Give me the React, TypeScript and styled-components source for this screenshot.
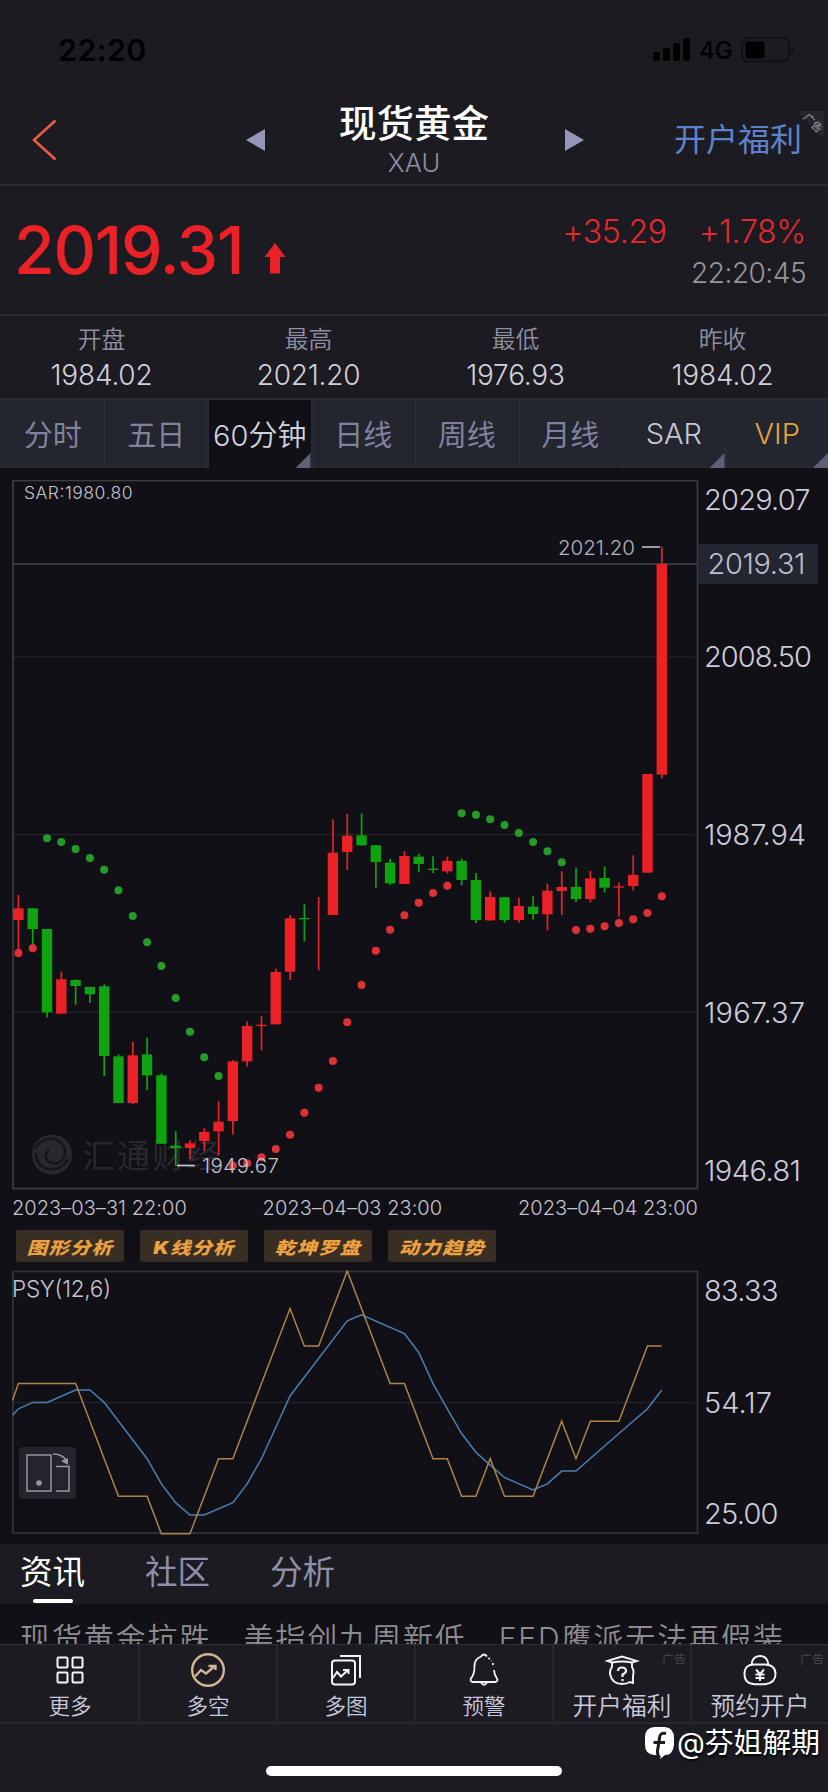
import React from "react";
import styled, { createGlobalStyle, css } from "styled-components";

type Tone = "up" | "down";
// [tone, high, body top, body bottom, low], in thirds of a pixel from CANDLE_BASE
type Candle = [Tone, number, number, number, number];

const CANDLE_BASE = 300;
const FIRST_X = 18.4;
const STEP = 14.297;
const RED = "#ea2127";
const GREEN = "#0fa30f";

const candles: Candle[] = [
  ["up", 345, 385, 420, 510],
  ["down", 385, 385, 447, 495],
  ["down", 447, 447, 697, 712],
  ["up", 575, 598, 701, 701],
  ["down", 598, 600, 618, 674],
  ["down", 620, 621, 643, 669],
  ["down", 613, 619, 828, 888],
  ["down", 823, 829, 969, 969],
  ["up", 786, 826, 969, 972],
  ["down", 773, 823, 886, 930],
  ["down", 880, 886, 1091, 1091],
  ["down", 1053, 1097, 1104, 1158],
  ["up", 1081, 1090, 1104, 1137],
  ["up", 1045, 1056, 1083, 1113],
  ["up", 964, 1025, 1054, 1126],
  ["up", 840, 844, 1023, 1064],
  ["up", 724, 738, 844, 860],
  ["up", 708, 734, 738, 811],
  ["up", 566, 576, 733, 733],
  ["up", 405, 415, 575, 600],
  ["down", 373, 414, 418, 484],
  ["up", 351, 351, 351, 571],
  ["up", 118, 218, 405, 405],
  ["up", 102, 167, 216, 270],
  ["down", 100, 166, 196, 196],
  ["down", 195, 196, 246, 323],
  ["down", 237, 248, 310, 314],
  ["up", 214, 228, 312, 312],
  ["down", 221, 230, 252, 277],
  ["down", 229, 266, 270, 279],
  ["up", 230, 243, 274, 280],
  ["down", 236, 243, 300, 316],
  ["down", 279, 300, 420, 429],
  ["up", 334, 351, 421, 423],
  ["down", 351, 352, 420, 428],
  ["up", 353, 378, 420, 428],
  ["down", 349, 380, 402, 419],
  ["up", 311, 332, 403, 451],
  ["up", 274, 321, 333, 405],
  ["down", 263, 321, 357, 366],
  ["up", 273, 295, 357, 367],
  ["down", 260, 294, 323, 338],
  ["up", 308, 319, 323, 410],
  ["up", 226, 285, 318, 332],
  ["up", -18, -18, 278, 278],
  ["up", -700, -648, -16, -5],
];

const sarRuns: { tone: Tone; from: number; values: number[] }[] = [
  { tone: "up", from: 0, values: [519, 505] },
  {
    tone: "down",
    from: 2,
    values: [175, 186, 207, 234, 269, 331, 408, 487, 558, 654, 755, 832, 888],
  },
  {
    tone: "up",
    from: 15,
    values: [
      1157, 1150, 1132, 1107, 1064, 998, 923, 843, 727, 615, 512, 449, 406, 368,
      339, 317,
    ],
  },
  { tone: "down", from: 31, values: [100, 104, 118, 135, 159, 186, 214, 247] },
  { tone: "up", from: 39, values: [450, 446, 439, 429, 418, 399, 349] },
];

// [candle index, steps above the lowest level]
const psyLine: [number, number][] = [
  [-0.41, 3.55], [0, 4], [4, 4], [7, 1], [9, 1], [10, 0], [12, 0], [14, 2],
  [15, 2], [19, 6], [20, 5], [21, 5], [23, 7], [26, 4], [27, 4], [29, 2],
  [30, 2], [31, 1], [32, 1], [33, 2], [34, 1], [36, 1], [38, 3], [39, 2],
  [40, 3], [42, 3], [44, 5], [45, 5],
];
const psyAverage: [number, number][] = [
  [-0.41, 3.16], [0, 3.33], [1, 3.5], [2, 3.5], [4, 3.83], [5, 3.83], [6, 3.5],
  [9, 2], [10, 1.33], [11, 0.83], [12, 0.5], [13, 0.5], [15, 0.83], [16, 1.33],
  [17, 2], [18, 2.83], [19, 3.67], [23, 5.67], [24, 5.83], [27, 5.33],
  [28, 4.83], [29, 4], [30, 3.33], [31, 2.67], [32, 2.17], [33, 1.83],
  [34, 1.5], [36, 1.17], [37, 1.33], [38, 1.67], [39, 1.67], [42, 2.67],
  [44, 3.33], [45, 3.83],
];

const stats = [
  { label: "开盘", value: "1984.02" },
  { label: "最高", value: "2021.20" },
  { label: "最低", value: "1976.93" },
  { label: "昨收", value: "1984.02" },
];

const periods: { label: string; kind?: "active" | "light" | "gold"; corner?: boolean }[] = [
  { label: "分时" },
  { label: "五日" },
  { label: "60分钟", kind: "active", corner: true },
  { label: "日线" },
  { label: "周线" },
  { label: "月线" },
  { label: "SAR", kind: "light", corner: true },
  { label: "VIP", kind: "gold", corner: true },
];

const axisLabels = [
  { text: "2029.07", y: 19, width: 106.5 },
  { text: "2008.50", y: 176.5, width: 108 },
  { text: "1987.94", y: 354.5, width: 102 },
  { text: "1967.37", y: 532, width: 101 },
  { text: "1946.81", y: 690, width: 97 },
];

const candleX = (index: number) => FIRST_X + STEP * index;
const candleY = (value: number) => CANDLE_BASE + value / 3;
const toneColor = (tone: Tone) => (tone === "up" ? RED : GREEN);
const psyPoints = (points: [number, number][]) =>
  points.map(([i, level]) => `${candleX(i)},${263.8 - level * 37.55}`).join(" ");

const PriceChart = () => (
  <ChartSvg width="828" height="712" viewBox="0 0 828 712">
    <g stroke="#212129" strokeWidth="1.5">
      <path d="M13 177H695M13 354.5H695M13 532.3H695" />
    </g>
    <g opacity="0.9">
      <circle cx="52" cy="674.5" r="20" fill="#2c2b31" />
      <path
        d="M35 669q9-15 24-8q10 8 4 18q-7 8-15 2q-5-6 1-11M68 679q-6 12-20 10q-13-4-12-16"
        fill="none"
        stroke="#17161c"
        strokeWidth="2.5"
      />
      <text x="82" y="688" fontSize="33" fontWeight="400" fill="#2c2b31" textLength="138">
        汇通财经
      </text>
    </g>
    <path d="M13 84H698" stroke="#45454d" strokeWidth="1.5" />
    <rect x="13" y="0.5" width="684.5" height="708" fill="none" stroke="#3c3c43" strokeWidth="1.7" />
    {candles.map(([tone, high, top, bottom, low], i) => (
      <g key={i} fill={toneColor(tone)}>
        <rect x={candleX(i) - 0.8} y={candleY(high)} width="1.7" height={(low - high) / 3} />
        <rect x={candleX(i) - 5.2} y={candleY(top)} width="10.4" height={(bottom - top) / 3} />
      </g>
    ))}
    {sarRuns.map((run) =>
      run.values.map((value, i) => (
        <circle
          key={run.from + i}
          cx={candleX(run.from + i)}
          cy={candleY(value)}
          r="4"
          fill={run.tone === "up" ? "#de3035" : "#259b28"}
        />
      ))
    )}
    <text x="24" y="19" fontSize="17.5" fill="#c4c3d1" textLength="108.5">
      SAR:1980.80
    </text>
    <path d="M642 67H660" stroke="#b4b3c1" strokeWidth="1.7" />
    <text x="558" y="74.5" fontSize="20.5" fill="#b4b3c1" textLength="77">
      2021.20
    </text>
    <path d="M177 685.5H195" stroke="#c4c3d1" strokeWidth="1.7" />
    <text x="202" y="692.5" fontSize="20.5" fill="#c4c3d1" textLength="77">
      1949.67
    </text>
    <rect x="698" y="64" width="120" height="40" fill="#212630" />
    <text x="707.5" y="94" fontSize="29" fill="#bcbecb" textLength="98">
      2019.31
    </text>
    {axisLabels.map(({ text, y, width }) => (
      <text key={text} x="704" y={y + 10.5} fontSize="29" fill="#cccbda" textLength={width}>
        {text}
      </text>
    ))}
  </ChartSvg>
);

const PsyChart = () => (
  <ChartSvg width="828" height="274" viewBox="0 0 828 274">
    <path d="M13 132.5H695" stroke="#212129" strokeWidth="1.5" />
    <rect x="13" y="1.5" width="684.5" height="261.5" fill="none" stroke="#34343b" strokeWidth="1.7" />
    <polyline points={psyPoints(psyAverage)} fill="none" stroke="#4b7fb3" strokeWidth="1.5" />
    <polyline points={psyPoints(psyLine)} fill="none" stroke="#ad8447" strokeWidth="1.5" />
    <text x="12" y="27" fontSize="22.5" fill="#c4c3d1" textLength="99">
      PSY(12,6)
    </text>
    <rect x="19" y="177" width="57" height="52" rx="4" fill="#24242e" />
    <g fill="none" stroke="#97969c" strokeWidth="1.5">
      <rect x="27" y="185" width="24" height="36" />
      <path d="M56 196.500H69V221H56M53 184q9 0 13 6" />
    </g>
    <circle cx="39" cy="213" r="2.8" fill="#97969c" />
    <path d="M61 191L68 188V195Z" fill="#97969c" />
    {[
      { text: "83.33", y: 20, width: 74.5 },
      { text: "54.17", y: 132, width: 68 },
      { text: "25.00", y: 243.5, width: 74.5 },
    ].map(({ text, y, width }) => (
      <text key={text} x="704" y={y + 10.5} fontSize="29" fill="#cccbda" textLength={width}>
        {text}
      </text>
    ))}
  </ChartSvg>
);

const MoreIcon = () => (
  <svg width="36" height="36" viewBox="0 0 36 36" fill="none" stroke="#f4f4f6" strokeWidth="2">
    <rect x="5.500" y="5.500" width="10" height="10" rx="1" />
    <rect x="20.500" y="5.500" width="10" height="10" rx="1" />
    <rect x="5.500" y="20.500" width="10" height="10" rx="1" />
    <rect x="20.500" y="20.500" width="10" height="10" rx="1" />
  </svg>
);

const LongShortIcon = () => (
  <svg width="36" height="36" viewBox="0 0 36 36" fill="none" stroke="#d3b594" strokeWidth="2.4">
    <circle cx="18" cy="18" r="15.800" />
    <path d="M5 24.500L11 18L16 21.500L25 14M18.500 14H25.500V18" />
  </svg>
);

const MultiChartIcon = () => (
  <svg width="36" height="36" viewBox="0 0 36 36" fill="none" stroke="#f4f4f6" strokeWidth="2">
    <rect x="4" y="8.500" width="23" height="24" rx="3" />
    <path d="M12 4H32V26M5 26L9 20L13 24.500L20 18M15 18H20.500V22" />
  </svg>
);

const BellIcon = () => (
  <svg width="36" height="36" viewBox="0 0 36 36" fill="none" stroke="#f4f4f6" strokeWidth="1.8">
    <path d="M21 4.500Q19.500 2.500 18 2.500T15 4.500Q8.500 7 8.500 14Q8.500 23 4.800 26.500Q4 30 7 30H29Q32.500 29.500 31 26.500Q28.200 23 28 18" />
    <path d="M22.500 5.800L25.500 9M26.700 11L27.500 15" strokeDasharray="2 2" />
    <path d="M15 30.500Q18 35 21 30.500" />
  </svg>
);

const GraduateIcon = () => (
  <svg width="36" height="36" viewBox="0 0 36 36" fill="none" stroke="#f4f4f6" strokeWidth="1.9">
    <path d="M3.500 9L18 4.500L33 9L28 10.500Q18 8.500 8 10.500Z" />
    <path d="M8 11V15Q5.500 18 6 22Q8 32 18 32Q23 32 26 30L29 31V24Q30.500 19 28 15V10.500" />
    <path d="M14 19Q14 15.500 18 15.500T22 19Q22 21 18.500 22.500V25M18.500 27V29.200" strokeWidth="2.200" />
  </svg>
);

const PurseIcon = () => (
  <svg width="36" height="36" viewBox="0 0 36 36" fill="none" stroke="#f4f4f6" strokeWidth="1.9">
    <path d="M9.500 13.500Q10 4 18 4T26.500 13.500M13 12.500H23Q33.500 13 33.500 22T23 32.200H13Q2.500 32 2.500 22T13 12.500Z" />
    <path d="M14 17.500L18 22L22 17.500M18 22V29M13.500 22.500H22.500M13.500 26H22.500" />
  </svg>
);

const actions = [
  { label: "更多", icon: <MoreIcon />, size: 21.5 },
  { label: "多空", icon: <LongShortIcon />, size: 21.5 },
  { label: "多图", icon: <MultiChartIcon />, size: 21.5 },
  { label: "预警", icon: <BellIcon />, size: 21.5 },
  { label: "开户福利", icon: <GraduateIcon />, size: 24.7, ad: true },
  { label: "预约开户", icon: <PurseIcon />, size: 24.7, ad: true },
];

const App = () => {
  return (
    <Screen>
      <GlobalStyle />
      <StatusBar>
        <Clock>22:20</Clock>
        <Signals>
          <svg width="38" height="26" viewBox="0 0 38 26">
            <rect x="0" y="15" width="7" height="9" rx="2" />
            <rect x="10" y="11" width="7" height="13" rx="2" />
            <rect x="20" y="6" width="7" height="18" rx="2" />
            <rect x="30" y="1" width="7" height="23" rx="2" />
          </svg>
          <Network>4G</Network>
          <svg width="54" height="26" viewBox="0 0 54 26">
            <rect x="1" y="1" width="47" height="23.500" rx="6" fill="none" stroke="#111015" strokeWidth="2" />
            <rect x="4.500" y="4.500" width="19" height="17" rx="3" />
            <path d="M50 9q3 1.500 3 4t-3 4z" fill="#111015" />
          </svg>
        </Signals>
      </StatusBar>

      <Header>
        <svg width="26" height="42" viewBox="0 0 26 42">
          <path d="M23.500 1.500L2 21L23.500 40.500" fill="none" stroke="#ee5b45" strokeWidth="2.6" />
        </svg>
        <Switcher>
          <Arrow $side="left" />
          <Title>
            <TitleName>现货黄金</TitleName>
            <TitleCode>XAU</TitleCode>
          </Title>
          <Arrow $side="right" />
        </Switcher>
        <BonusLink>
          开户福利
          <CornerAd>
            <span>广告</span>
          </CornerAd>
        </BonusLink>
      </Header>

      <Quote>
        <Price>2019.31</Price>
        <svg width="22" height="32" viewBox="0 0 22 32">
          <path d="M11 1L21.500 15H16V31.500H6V15H0.500Z" fill="#ea2127" />
        </svg>
        <Change>
          <ChangeRow>
            <span>+35.29</span>
            <span>+1.78%</span>
          </ChangeRow>
          <QuoteTime>22:20:45</QuoteTime>
        </Change>
      </Quote>

      <Stats>
        {stats.map(({ label, value }) => (
          <Stat key={label}>
            <StatLabel>{label}</StatLabel>
            <StatValue>{value}</StatValue>
          </Stat>
        ))}
      </Stats>

      <Periods>
        {periods.map(({ label, kind, corner }) => (
          <Period key={label} $kind={kind} $corner={corner}>
            {label}
          </Period>
        ))}
      </Periods>

      <ChartArea>
        <PriceChart />
        <Dates>
          <span>2023–03–31 22:00</span>
          <span>2023–04–03 23:00</span>
          <span>2023–04–04 23:00</span>
        </Dates>
        <Chips>
          {["图形分析", "K线分析", "乾坤罗盘", "动力趋势"].map((label) => (
            <Chip key={label}>
              <span>{label}</span>
            </Chip>
          ))}
        </Chips>
        <PsyChart />
      </ChartArea>

      <Sections>
        <Section $active>资讯</Section>
        <Section>社区</Section>
        <Section>分析</Section>
      </Sections>
      <News>
        <span>现货黄金抗跌</span>
        <span>美指创九周新低</span>
        <span>FED鹰派无法再假装</span>
      </News>

      <Actions>
        {actions.map(({ label, icon, size, ad }) => (
          <Action key={label}>
            {icon}
            <ActionLabel $size={size}>{label}</ActionLabel>
            {ad && <AdTag>广告</AdTag>}
          </Action>
        ))}
      </Actions>

      <Footer>
        <Signature>
          <svg width="30" height="32" viewBox="0 0 30 32">
            <path
              d="M9 0H20Q29 1 29 11V18Q28 28 20 28L15 32L14 28H9Q0 27 0 18V10Q0 1 9 0Z"
              fill="#fff"
            />
            <path
              d="M21 6.500Q15 5 14.500 11L12.500 24Q12 28 15 31M8.500 15.500H20"
              fill="none"
              stroke="#1c1b21"
              strokeWidth="3"
            />
          </svg>
          <span>@芬姐解期</span>
        </Signature>
        <HomeBar />
      </Footer>
    </Screen>
  );
};

export default App;

const GlobalStyle = createGlobalStyle`
  * {
    box-sizing: border-box;
  }
  body {
    margin: 0;
    background: #1c1b21;
    font-family: Inter, "Noto Sans CJK SC", sans-serif;
    font-weight: 350;
  }
  svg {
    display: block;
    flex: none;
  }
`;

const Screen = styled.div`
  width: 828px;
  height: 1792px;
  overflow: hidden;
  display: flex;
  flex-direction: column;
  background: #1c1b21;
  white-space: nowrap;
  > * {
    flex: none;
  }
`;

const StatusBar = styled.div`
  height: 95px;
  padding: 4px 33px 0 58px;
  display: flex;
  align-items: center;
  justify-content: space-between;
  color: #000;
`;

const Clock = styled.div`
  font-size: 30.5px;
  font-weight: 600;
  letter-spacing: 0.4px;
`;

const Signals = styled.div`
  display: flex;
  align-items: center;
  gap: 8px;
`;

const Network = styled.div`
  width: 34px;
  font-size: 24.5px;
  font-weight: 500;
  letter-spacing: -0.5px;
`;

const Header = styled.header`
  height: 91px;
  padding: 0 26px 0 32px;
  display: grid;
  grid-template-columns: 214px 338px 1fr;
  align-items: center;
  border-bottom: 2px solid #2a2a30;
`;

const Switcher = styled.div`
  height: 89px;
  display: flex;
  align-items: center;
  justify-content: space-between;
`;

const Arrow = styled.div<{ $side: "left" | "right" }>`
  border: 11px solid transparent;
  border-width: 11px 0;
  ${({ $side }) =>
    $side === "left"
      ? css`
          border-right: 19px solid #9496b5;
        `
      : css`
          border-left: 19px solid #9496b5;
        `}
`;

const Title = styled.div`
  padding: 3px 2px 0 0;
  display: flex;
  flex-direction: column;
  align-items: center;
`;

const TitleName = styled.div`
  font-size: 37.5px;
  line-height: 44px;
  font-weight: 500;
  color: #fff;
`;

const TitleCode = styled.div`
  font-size: 25.5px;
  line-height: 34px;
  color: #8e8ea3;
`;

const BonusLink = styled.div`
  position: relative;
  justify-self: end;
  font-size: 32px;
  line-height: 44px;
  font-weight: 400;
  color: #5d84cb;
`;

const CornerAd = styled.div`
  position: absolute;
  top: -7px;
  right: -22px;
  width: 28px;
  height: 28px;
  background: linear-gradient(45deg, transparent 50%, #26262b 50%);
  color: #a0a0a6;
  font-size: 11px;
  line-height: 14px;

  > span {
    position: absolute;
    top: 5px;
    left: 6px;
    transform: rotate(45deg);
  }
`;

const Quote = styled.section`
  height: 130px;
  padding: 0 22px 0 14px;
  display: flex;
  align-items: center;
  border-bottom: 2px solid #2a2a30;

  > svg {
    margin: 16px 0 0 22px;
  }
`;

const Price = styled.div`
  width: 228px;
  font-size: 66px;
  font-weight: 500;
  letter-spacing: -1.2px;
  color: #ea2127;
`;

const Change = styled.div`
  margin-left: auto;
  padding-top: 3px;
  display: flex;
  flex-direction: column;
  align-items: flex-end;
`;

const ChangeRow = styled.div`
  display: flex;
  gap: 32px;
  font-size: 32px;
  line-height: 42px;
  letter-spacing: -0.3px;
  color: #e3292e;
`;

const QuoteTime = styled.div`
  font-size: 28px;
  line-height: 40px;
  letter-spacing: -0.5px;
  color: #95959c;
`;

const Stats = styled.section`
  height: 84px;
  padding-top: 6px;
  display: grid;
  grid-template-columns: repeat(4, 1fr);
  border-bottom: 2px solid #2a2a30;
`;

const Stat = styled.div`
  padding-right: 4px;
  display: flex;
  flex-direction: column;
  align-items: center;
`;

const StatLabel = styled.div`
  font-size: 23.8px;
  line-height: 35px;
  color: #8f8fa4;
`;

const StatValue = styled.div`
  font-size: 28px;
  line-height: 36px;
  letter-spacing: -0.2px;
  color: #d1d0dd;
`;

const Periods = styled.nav`
  height: 68px;
  display: grid;
  grid-template-columns: repeat(8, 1fr);
  background: #23252f;
  border-bottom: 2px solid #292a31;
`;

interface PeriodProps {
  $kind?: "active" | "light" | "gold";
  $corner?: boolean;
}
const Period = styled.div<PeriodProps>`
  position: relative;
  height: 68px;
  padding-bottom: 2px;
  display: flex;
  align-items: center;
  justify-content: center;
  border-left: 2px solid #292b34;
  font-size: 29px;
  font-weight: 400;
  color: #80829f;

  &:first-child {
    border-color: transparent;
  }

  ${({ $kind }) =>
    $kind === "active" &&
    css`
      background: #111016;
      font-weight: 350;
      color: #d0d0de;
    `}
  ${({ $kind }) =>
    $kind === "light" &&
    css`
      font-weight: 350;
      color: #c8c9d8;
    `}
  ${({ $kind }) =>
    $kind === "gold" &&
    css`
      font-weight: 350;
      color: #e4a441;
    `}
  ${({ $corner }) =>
    $corner &&
    css`
      &::after {
        content: "";
        position: absolute;
        right: 0;
        bottom: 0;
        width: 15px;
        height: 15px;
        background: #5f5f76;
        clip-path: polygon(100% 0, 100% 100%, 0 100%);
      }
    `}
`;

const ChartArea = styled.main`
  height: 1076px;
  padding-top: 12px;
  background: #111016;
`;

const ChartSvg = styled.svg`
  font-family: Inter, "Noto Sans CJK SC", sans-serif;
  font-weight: 350;
`;

const Dates = styled.div`
  height: 30px;
  padding: 2px 130px 0 12px;
  display: flex;
  align-items: center;
  justify-content: space-between;
  font-size: 20px;
  letter-spacing: 0.05px;
  color: #c4c3d1;
`;

const Chips = styled.div`
  height: 48px;
  padding: 8px 16px;
  display: flex;
  gap: 16px;
`;

const Chip = styled.div`
  width: 108px;
  height: 32px;
  display: flex;
  align-items: center;
  justify-content: center;
  border-radius: 2px;
  background: #382e23;
  color: #eda03f;
  font-size: 17px;
  font-style: italic;
  font-weight: 900;
  letter-spacing: 1px;

  > span {
    transform: scaleX(1.2);
  }
`;

const Sections = styled.nav`
  height: 60px;
  padding: 1px 0 0 20px;
  display: flex;
  gap: 60px;
`;

const Section = styled.div<{ $active?: boolean }>`
  position: relative;
  font-size: 32.5px;
  line-height: 56px;
  font-weight: 400;
  color: ${({ $active }) => ($active ? "#fff" : "#8e8fa9")};

  ${({ $active }) =>
    $active &&
    css`
      &::after {
        content: "";
        position: absolute;
        left: 13px;
        bottom: 1px;
        width: 40px;
        height: 4px;
        border-radius: 2px;
        background: #fff;
      }
    `}
`;

const News = styled.div`
  height: 40px;
  padding: 12px 0 0 20px;
  display: flex;
  gap: 32px;
  overflow: hidden;
  background: #111016;
  color: #8d8c91;
  font-size: 30px;
  line-height: 44px;
  letter-spacing: 1.9px;
`;

const Actions = styled.nav`
  height: 80px;
  display: grid;
  grid-template-columns: repeat(6, 1fr);
  border-top: 1px solid #2d2d33;
  border-bottom: 2px solid #27272d;
`;

const Action = styled.div`
  position: relative;
  padding-top: 7px;
  display: flex;
  flex-direction: column;
  align-items: center;
  border-left: 2px solid #27272d;

  &:first-child {
    border-color: transparent;
  }
`;

const ActionLabel = styled.div<{ $size: number }>`
  font-size: ${({ $size }) => $size}px;
  line-height: 36px;
  color: #c8c9de;
`;

const AdTag = styled.div`
  position: absolute;
  top: 7px;
  right: 4px;
  font-size: 12px;
  line-height: 16px;
  color: #4a4a50;
`;

const Footer = styled.footer`
  height: 68px;
  display: flex;
  flex-direction: column;
  align-items: center;
`;

const Signature = styled.div`
  height: 38px;
  padding-right: 8px;
  align-self: flex-end;
  display: flex;
  align-items: center;
  gap: 2px;
  color: #fff;
  font-size: 28.8px;
  font-weight: 400;
  line-height: 36px;
  text-shadow: 1px 2px 2px #000;
`;

const HomeBar = styled.div`
  width: 296px;
  height: 10px;
  margin-top: 4px;
  border-radius: 5px;
  background: #fff;
`;
